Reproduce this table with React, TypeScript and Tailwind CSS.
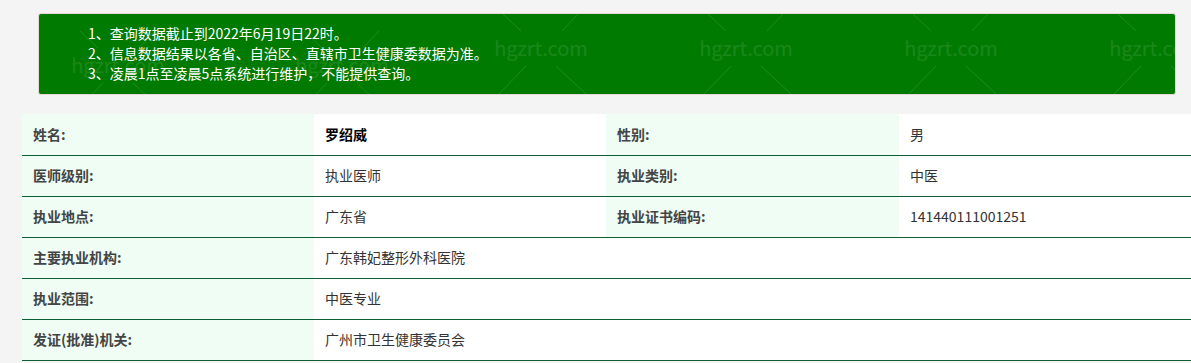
import React from 'react'

const marks = [
  { x: 79, y: 51 },
  { x: 303, y: 51 },
  { x: 502, y: 34 },
  { x: 707, y: 34 },
  { x: 912, y: 34 },
  { x: 1117, y: 34 },
]

const Watermark = ({ x, y }: { x: number; y: number }) => (
  <div className="pointer-events-none absolute" style={{ left: x - 60, top: y - 50 }}>
    <svg width="120" height="100" className="absolute left-0 top-0" stroke="rgba(255,255,255,0.13)" strokeWidth="1">
      <line x1="22" y1="16" x2="40" y2="33" />
      <line x1="97" y1="16" x2="81" y2="33" />
      <line x1="45" y1="68" x2="18" y2="96" />
      <line x1="75" y1="68" x2="105" y2="96" />
    </svg>
    <div className="flex h-[100px] w-[120px] items-center justify-center text-[20px] leading-none text-white/10">
      hgzrt.com
    </div>
  </div>
)

type Row = { label: string; value: string; label2?: string; value2?: string; bold?: boolean }

const rows: Row[] = [
  { label: '姓名:', value: '罗绍威', label2: '性别:', value2: '男', bold: true },
  { label: '医师级别:', value: '执业医师', label2: '执业类别:', value2: '中医' },
  { label: '执业地点:', value: '广东省', label2: '执业证书编码:', value2: '141440111001251' },
  { label: '主要执业机构:', value: '广东韩妃整形外科医院' },
  { label: '执业范围:', value: '中医专业' },
  { label: '发证(批准)机关:', value: '广州市卫生健康委员会' },
]

export default function App() {
  return (
    <div
      className="min-h-[363px] w-[1191px] overflow-hidden bg-[#f4f4f4] pt-[13px]"
      style={{ fontFamily: '"Microsoft YaHei", "Noto Sans CJK SC", "Noto Sans", sans-serif' }}
    >
      <div className="relative ml-[38px] mr-[15px] overflow-hidden rounded-[3px] border border-[#ead6d6] bg-[#007a00] pb-[11px] pl-[49px] pt-[9px]">
        {marks.map((m, i) => (
          <Watermark key={i} x={m.x} y={m.y} />
        ))}
        <ul className="relative text-[14px] leading-[20px] text-white">
          <li>1、查询数据截止到2022年6月19日22时。</li>
          <li>2、信息数据结果以各省、自治区、直辖市卫生健康委数据为准。</li>
          <li>3、凌晨1点至凌晨5点系统进行维护，不能提供查询。</li>
        </ul>
      </div>

      <table className="ml-[22px] mt-[19px] w-[1170px] table-fixed border-collapse text-[14px]">
        <colgroup>
          <col className="w-[292px]" />
          <col className="w-[292px]" />
          <col className="w-[293px]" />
          <col />
        </colgroup>
        <tbody>
          {rows.map((r, i) => (
            <tr key={i} className="h-[41px] border-b border-[#0d5e33]">
              <td className="bg-[#effdf5] px-[11px] font-bold text-[#444]">{r.label}</td>
              {r.label2 ? (
                <>
                  <td className={`bg-white px-[11px] ${r.bold ? 'font-bold text-black' : 'text-[#333]'}`}>{r.value}</td>
                  <td className="bg-[#effdf5] px-[11px] font-bold text-[#444]">{r.label2}</td>
                  <td className="bg-white px-[11px] text-[#333]">{r.value2}</td>
                </>
              ) : (
                <td colSpan={3} className="bg-white px-[11px] text-[#333]">
                  {r.value}
                </td>
              )}
            </tr>
          ))}
        </tbody>
      </table>
    </div>
  )
}
